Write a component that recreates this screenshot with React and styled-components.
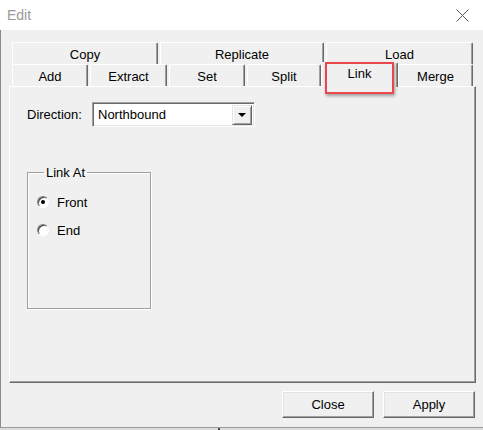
import styled, { createGlobalStyle } from 'styled-components';

const GlobalStyle = createGlobalStyle`
  html, body {
    margin: 0;
    padding: 0;
    background: #f0f0f0;
  }
  * {
    box-sizing: border-box;
  }
`;

const Window = styled.div`
  width: 483px;
  height: 430px;
  display: flex;
  flex-direction: column;
  font-family: "Liberation Sans", Arial, sans-serif;
  font-size: 13px;
  color: #000;
  overflow: hidden;
`;

const TitleBar = styled.div`
  height: 30px;
  flex: none;
  background: #fff;
  display: flex;
  align-items: center;
  justify-content: space-between;
  padding: 0 14px 0 7px;
`;

const Title = styled.span`
  font-size: 14px;
  color: #999;
`;

const Body = styled.div`
  height: 398px;
  flex: none;
  background: #f0f0f0;
  border-left: 1px solid #8a8a8a;
  border-bottom: 1px solid #9a9a9a;
  padding: 12px 7px 0 8px;
  display: flex;
  flex-direction: column;
`;

const TabControl = styled.div`
  display: flex;
  flex-direction: column;
  width: 467px;
`;

const TabRow = styled.div`
  display: flex;
  align-items: flex-end;
  gap: 2px;
  height: 22px;
  padding-left: 3px;
`;

const Tab = styled.div`
  position: relative;
  width: ${p => p.$w}px;
  height: 22px;
  display: flex;
  align-items: center;
  justify-content: center;
  background: #f0f0f0;
  border-top: 1px solid #fff;
  border-left: 1px solid #fff;
  border-right: 1px solid #696969;
  box-shadow: inset -1px 0 0 #a0a0a0;
  border-radius: 2px 2px 0 0;
  padding-top: 1px;
`;

const ActiveTab = styled(Tab)`
  width: ${p => p.$w + 4}px;
  height: 25px;
  margin: 0 -2px -1px;
  z-index: 2;
  align-items: flex-start;
  padding-top: 3px;
`;

const Highlight = styled.div`
  position: absolute;
  left: 3px;
  top: -1px;
  width: 69px;
  height: 32px;
  border: 2px solid #e8474b;
  box-shadow: 1px 2px 3px rgba(0, 0, 0, 0.35);
  pointer-events: none;
`;

const Panel = styled.div`
  position: relative;
  z-index: 1;
  height: 297px;
  border-top: 1px solid #fff;
  border-left: 1px solid #fff;
  border-right: 1px solid #696969;
  border-bottom: 1px solid #696969;
  box-shadow: inset -1px -1px 0 #a0a0a0;
  padding: 15px 0 0 17px;
  display: flex;
  flex-direction: column;
`;

const FieldRow = styled.div`
  display: flex;
  align-items: center;
`;

const Label = styled.span`
  width: 65px;
`;

const Combo = styled.div`
  width: 163px;
  height: 25px;
  display: flex;
  align-items: center;
  background: #fff;
  border-top: 1px solid #a0a0a0;
  border-left: 1px solid #a0a0a0;
  border-right: 1px solid #fff;
  border-bottom: 1px solid #fff;
  box-shadow: inset 1px 1px 0 #696969, inset -1px -1px 0 #e3e3e3;
  padding: 2px 2px 2px 5px;
`;

const ComboText = styled.span`
  flex: 1;
`;

const ComboButton = styled.div`
  width: 20px;
  height: 20px;
  background: #f0f0f0;
  border-top: 1px solid #e3e3e3;
  border-left: 1px solid #e3e3e3;
  border-right: 1px solid #696969;
  border-bottom: 1px solid #696969;
  box-shadow: inset 1px 1px 0 #fff, inset -1px -1px 0 #a0a0a0;
  display: flex;
  align-items: center;
  justify-content: center;
`;

const Arrow = styled.div`
  width: 0;
  height: 0;
  border-left: 4px solid transparent;
  border-right: 4px solid transparent;
  border-top: 4px solid #000;
  margin-top: 1px;
`;

const GroupBox = styled.fieldset`
  width: 124px;
  height: 144px;
  margin: 38px 0 0;
  padding: 12px 0 0 9px;
  border: 1px solid #a0a0a0;
  box-shadow: 1px 1px 0 #fff, inset 1px 1px 0 #fff;
  display: flex;
  flex-direction: column;
  gap: 8px;
`;

const Legend = styled.legend`
  margin-left: 7px;
  padding: 0 2px;
`;

const RadioRow = styled.label`
  display: flex;
  align-items: center;
  gap: 8px;
  height: 20px;
`;

const RadioDot = styled.span`
  position: relative;
  width: 12px;
  height: 12px;
  border-radius: 50%;
  background: #fff;
  border: 1px solid;
  border-color: #808080 #fff #fff #808080;
  box-shadow: inset 1px 1px 0 #404040;

  &::after {
    content: '';
    display: ${p => (p.$checked ? 'block' : 'none')};
    position: absolute;
    left: 3px;
    top: 3px;
    width: 4px;
    height: 4px;
    border-radius: 50%;
    background: #000;
  }
`;

const ButtonRow = styled.div`
  display: flex;
  justify-content: flex-end;
  gap: 9px;
  margin-top: 8px;
  margin-right: 1px;
`;

const Button = styled.button`
  width: 92px;
  height: 27px;
  font-family: inherit;
  font-size: 13px;
  color: #000;
  background: #f0f0f0;
  border-top: 1px solid #fff;
  border-left: 1px solid #fff;
  border-right: 1px solid #696969;
  border-bottom: 1px solid #696969;
  box-shadow: inset -1px -1px 0 #a0a0a0, inset 1px 1px 0 #e3e3e3;
  padding: 0;
  border-radius: 0;
`;

const DesktopStrip = styled.div`
  flex: 1;
  background: #dcdcdc;
  display: flex;
  padding-left: 218px;
`;

const DesktopMark = styled.span`
  width: 2px;
  background: #4a4a4a;
`;

const topTabs = [
  { label: 'Copy', w: 146 },
  { label: 'Replicate', w: 164 },
  { label: 'Load', w: 147 },
];

const bottomTabs = [
  { label: 'Add', w: 76 },
  { label: 'Extract', w: 77 },
  { label: 'Set', w: 76 },
  { label: 'Split', w: 74 },
  { label: 'Link', w: 73, active: true },
  { label: 'Merge', w: 75 },
];

const CloseIcon = () => (
  <svg width="13" height="13" viewBox="0 0 13 13">
    <path d="M0.5 0.5 L12.5 12.5 M12.5 0.5 L0.5 12.5" stroke="#555" strokeWidth="1" fill="none" />
  </svg>
);

export default function App() {
  return (
    <>
      <GlobalStyle />
      <Window>
        <TitleBar>
          <Title>Edit</Title>
          <CloseIcon />
        </TitleBar>
        <Body>
          <TabControl>
            <TabRow>
              {topTabs.map(t => (
                <Tab key={t.label} $w={t.w}>{t.label}</Tab>
              ))}
            </TabRow>
            <TabRow>
              {bottomTabs.map(t =>
                t.active ? (
                  <ActiveTab key={t.label} $w={t.w}>
                    {t.label}
                    <Highlight />
                  </ActiveTab>
                ) : (
                  <Tab key={t.label} $w={t.w}>{t.label}</Tab>
                )
              )}
            </TabRow>
            <Panel>
              <FieldRow>
                <Label>Direction:</Label>
                <Combo>
                  <ComboText>Northbound</ComboText>
                  <ComboButton><Arrow /></ComboButton>
                </Combo>
              </FieldRow>
              <GroupBox>
                <Legend>Link At</Legend>
                <RadioRow><RadioDot $checked />Front</RadioRow>
                <RadioRow><RadioDot />End</RadioRow>
              </GroupBox>
            </Panel>
          </TabControl>
          <ButtonRow>
            <Button>Close</Button>
            <Button>Apply</Button>
          </ButtonRow>
        </Body>
        <DesktopStrip>
          <DesktopMark />
        </DesktopStrip>
      </Window>
    </>
  );
}
